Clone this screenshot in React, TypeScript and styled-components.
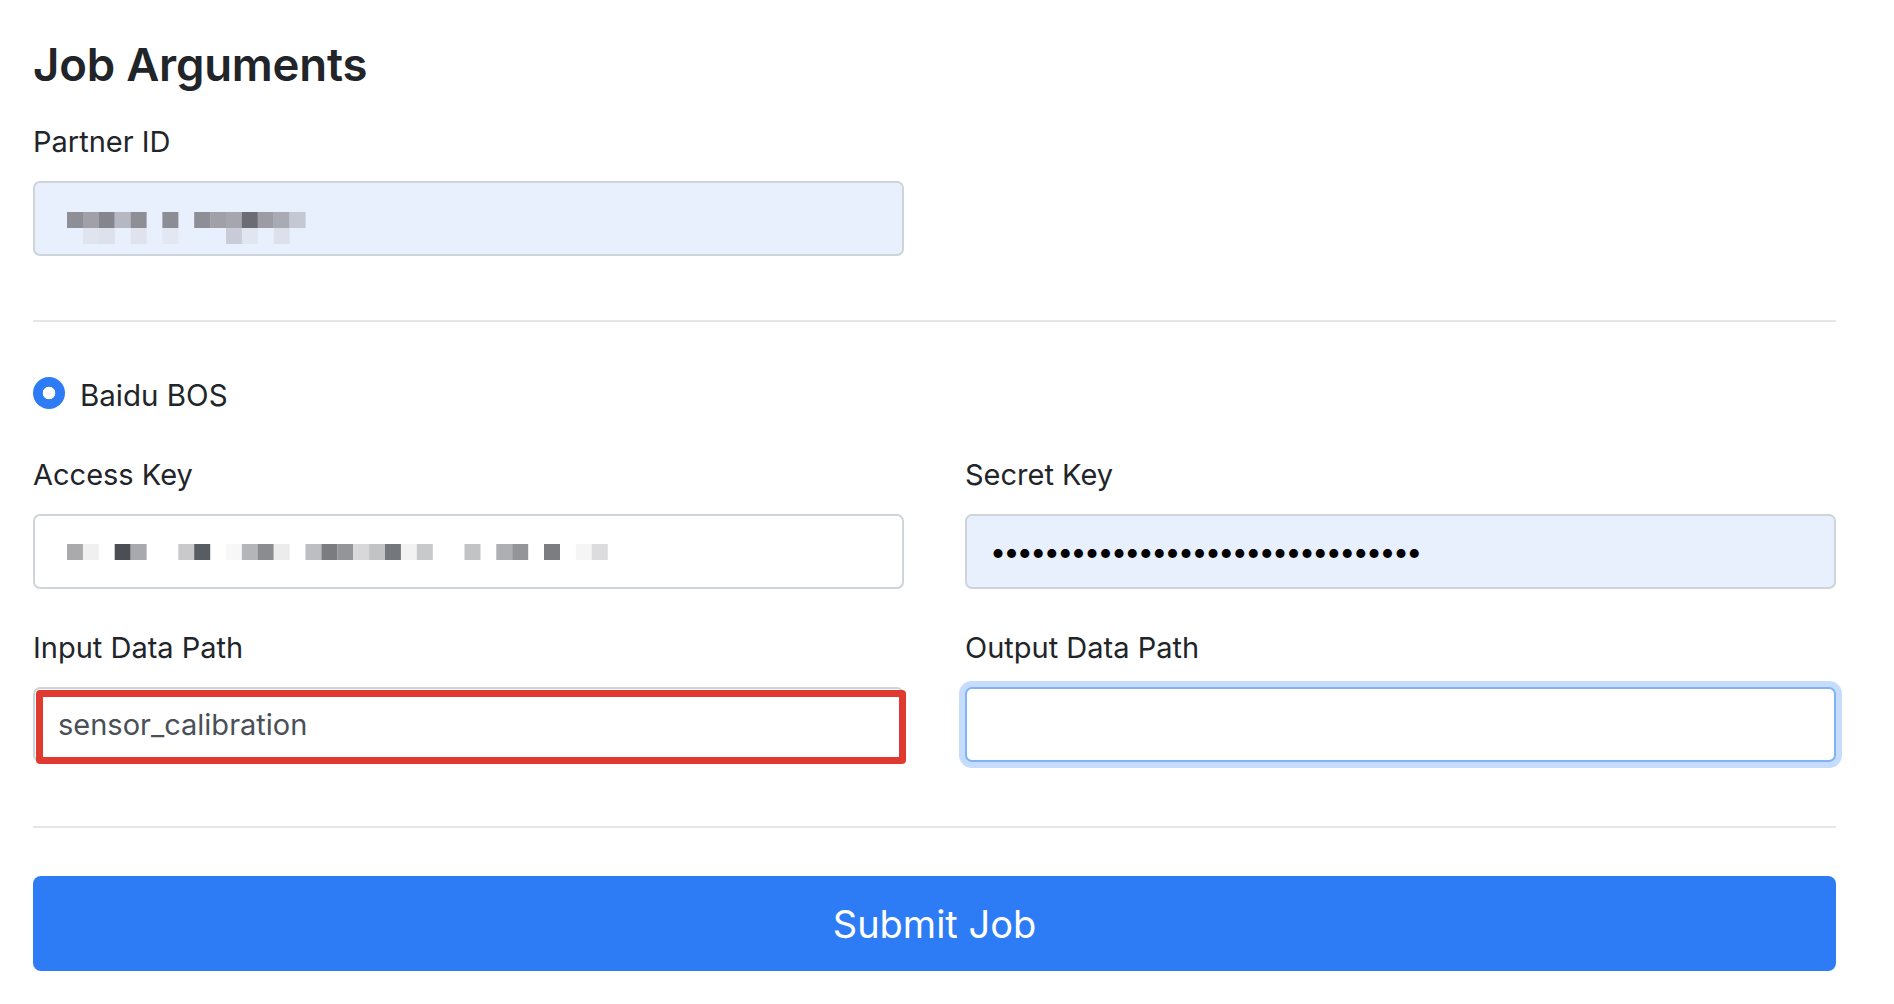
import React from "react";
import styled, { createGlobalStyle, css } from "styled-components";

const GlobalStyle = createGlobalStyle`
  html, body { margin: 0; padding: 0; background: #ffffff; }
  body {
    font-family: Inter, "Noto Sans", "Liberation Sans", sans-serif;
    color: #212529;
  }
  * { box-sizing: border-box; }
`;

const Page = styled.main`
  padding: 37px 58px 40px 33px;
  width: 1894px;
`;

const Title = styled.h3`
  margin: 0;
  font-size: 45.5px;
  line-height: 56px;
  font-weight: 600;
  color: #212529;
  letter-spacing: -0.2px;
`;

const Form = styled.form`
  margin-top: 32px;
  display: flex;
  flex-direction: column;
`;

const HalfGroup = styled.div`
  width: calc(50% - 30.5px);
  display: flex;
  flex-direction: column;
`;

const Group = styled.div`
  display: flex;
  flex-direction: column;
  min-width: 0;
`;

const Label = styled.label`
  font-size: 29px;
  line-height: 34px;
  font-weight: 400;
  color: #212529;
  margin-bottom: 22px;
`;

const fieldBase = css`
  height: 75px;
  width: 100%;
  border: 2px solid #cfd4da;
  border-radius: 7px;
  padding: 0 23px;
  font-family: Inter, "Noto Sans", "Liberation Sans", sans-serif;
  font-size: 29px;
  color: #495057;
  outline: none;
`;

const FieldBox = styled.div<{ $autofill?: boolean }>`
  ${fieldBase};
  display: flex;
  align-items: center;
  padding-left: 32px;
  background: ${(p) => (p.$autofill ? "#e8f0fe" : "#ffffff")};
`;

const TextInput = styled.input<{ $autofill?: boolean; $focused?: boolean }>`
  ${fieldBase};
  background: ${(p) => (p.$autofill ? "#e8f0fe" : "#ffffff")};
  ${(p) =>
    p.$focused &&
    css`
      border-color: #82b2f6;
      box-shadow: 0 0 0 6px rgba(45, 124, 246, 0.27);
    `}
`;

const PasswordInput = styled(TextInput)`
  letter-spacing: -2.6px;
  color: #000;
  font-size: 28.5px;
`;

const Divider = styled.hr<{ $top: number; $bottom: number }>`
  border: none;
  height: 2px;
  background: #e6e6e6;
  margin: ${(p) => p.$top}px 0 ${(p) => p.$bottom}px;
  width: 100%;
`;

const RadioRow = styled.label`
  display: flex;
  align-items: center;
  gap: 15px;
  height: 34px;
  font-size: 29.5px;
  line-height: 34px;
  color: #212529;
`;

const RadioDot = styled.input`
  appearance: none;
  -webkit-appearance: none;
  margin: 0 0 4px 0;
  width: 32px;
  height: 32px;
  border-radius: 50%;
  background: radial-gradient(circle, #ffffff 0 6px, #2d7cf6 6.6px);
  flex: none;
`;

const Grid = styled.div`
  margin-top: 46px;
  display: grid;
  grid-template-columns: 1fr 1fr;
  column-gap: 61px;
  row-gap: 42px;
`;

const Annotated = styled.div`
  position: relative;
`;

const RedMark = styled.div`
  position: absolute;
  top: 3px;
  left: 3px;
  right: -2px;
  bottom: -2px;
  border: 7px solid #e0392f;
  border-radius: 4px;
  pointer-events: none;
`;

const SubmitButton = styled.button`
  height: 95px;
  width: 100%;
  border: none;
  border-radius: 8px;
  background: #2d7cf6;
  color: #ffffff;
  font-family: Inter, "Noto Sans", "Liberation Sans", sans-serif;
  font-size: 38px;
  font-weight: 400;
  cursor: pointer;
`;

const MosaicSvg = styled.svg<{ $shift: number }>`
  display: block;
  flex: none;
  margin-top: ${(p) => p.$shift}px;
`;

type Cell = [number, number, string];

const Mosaic: React.FC<{ cells: Cell[]; cols: number; rows: number; shift?: number }> = ({
  cells,
  cols,
  rows,
  shift = 0,
}) => (
  <MosaicSvg
    $shift={shift}
    width={cols * 15.9}
    height={rows * 16}
    viewBox={`0 0 ${cols * 15.9} ${rows * 16}`}
    aria-hidden="true"
  >
    {cells.map(([c, r, fill], i) => (
      <rect key={i} x={c * 15.9} y={r * 16} width={16} height={16} fill={fill} />
    ))}
  </MosaicSvg>
);

const partnerCells: Cell[] = [
  [0, 0, "#8e8e96"],
  [1, 0, "#a0a0a8"],
  [2, 0, "#85858e"],
  [3, 0, "#b5b8c3"],
  [4, 0, "#8e8e97"],
  [6, 0, "#8c8c94"],
  [8, 0, "#8e8e96"],
  [9, 0, "#a0a0a8"],
  [10, 0, "#a6a6ae"],
  [11, 0, "#6c6c74"],
  [12, 0, "#9c9ca5"],
  [13, 0, "#a9abb4"],
  [14, 0, "#c5c8d2"],
  [1, 1, "#e0e4ee"],
  [2, 1, "#dde1ec"],
  [4, 1, "#e0e3ee"],
  [6, 1, "#e3e7f1"],
  [10, 1, "#c9ccd8"],
  [11, 1, "#e1e5ef"],
  [13, 1, "#dde0ea"],
];

const accessCells: Cell[] = [
  [0, 0, "#aaaaad"],
  [1, 0, "#f0f0f0"],
  [3, 0, "#4b4e55"],
  [4, 0, "#a7a9ac"],
  [7, 0, "#c9c9cc"],
  [8, 0, "#585c63"],
  [10, 0, "#f7f7f7"],
  [11, 0, "#b4b5b8"],
  [12, 0, "#8b8c90"],
  [13, 0, "#ececec"],
  [15, 0, "#bdbec1"],
  [16, 0, "#7a7c80"],
  [17, 0, "#939598"],
  [18, 0, "#d8d8da"],
  [19, 0, "#c2c3c5"],
  [20, 0, "#74777b"],
  [21, 0, "#f2f2f2"],
  [22, 0, "#c8c9cb"],
  [25, 0, "#c2c3c5"],
  [27, 0, "#aeafb2"],
  [28, 0, "#939598"],
  [30, 0, "#7b7d81"],
  [32, 0, "#f5f5f5"],
  [33, 0, "#dcdcde"],
];

export default function App() {
  return (
    <>
      <GlobalStyle />
      <Page>
        <Title>Job Arguments</Title>
        <Form onSubmit={(e) => e.preventDefault()}>
          <HalfGroup>
            <Label>Partner ID</Label>
            <FieldBox $autofill>
              <Mosaic cells={partnerCells} cols={15} rows={2} shift={19} />
            </FieldBox>
          </HalfGroup>

          <Divider $top={64} $bottom={56} />

          <RadioRow>
            <RadioDot type="radio" name="storage" defaultChecked />
            Baidu BOS
          </RadioRow>

          <Grid>
            <Group>
              <Label>Access Key</Label>
              <FieldBox>
                <Mosaic cells={accessCells} cols={34} rows={1} />
              </FieldBox>
            </Group>
            <Group>
              <Label>Secret Key</Label>
              <PasswordInput
                type="password"
                $autofill
                readOnly
                defaultValue={"x".repeat(32)}
              />
            </Group>
            <Group>
              <Label>Input Data Path</Label>
              <Annotated>
                <TextInput type="text" defaultValue="sensor_calibration" />
                <RedMark />
              </Annotated>
            </Group>
            <Group>
              <Label>Output Data Path</Label>
              <TextInput type="text" $focused defaultValue="" />
            </Group>
          </Grid>

          <Divider $top={64} $bottom={48} />

          <SubmitButton type="submit">Submit Job</SubmitButton>
        </Form>
      </Page>
    </>
  );
}
